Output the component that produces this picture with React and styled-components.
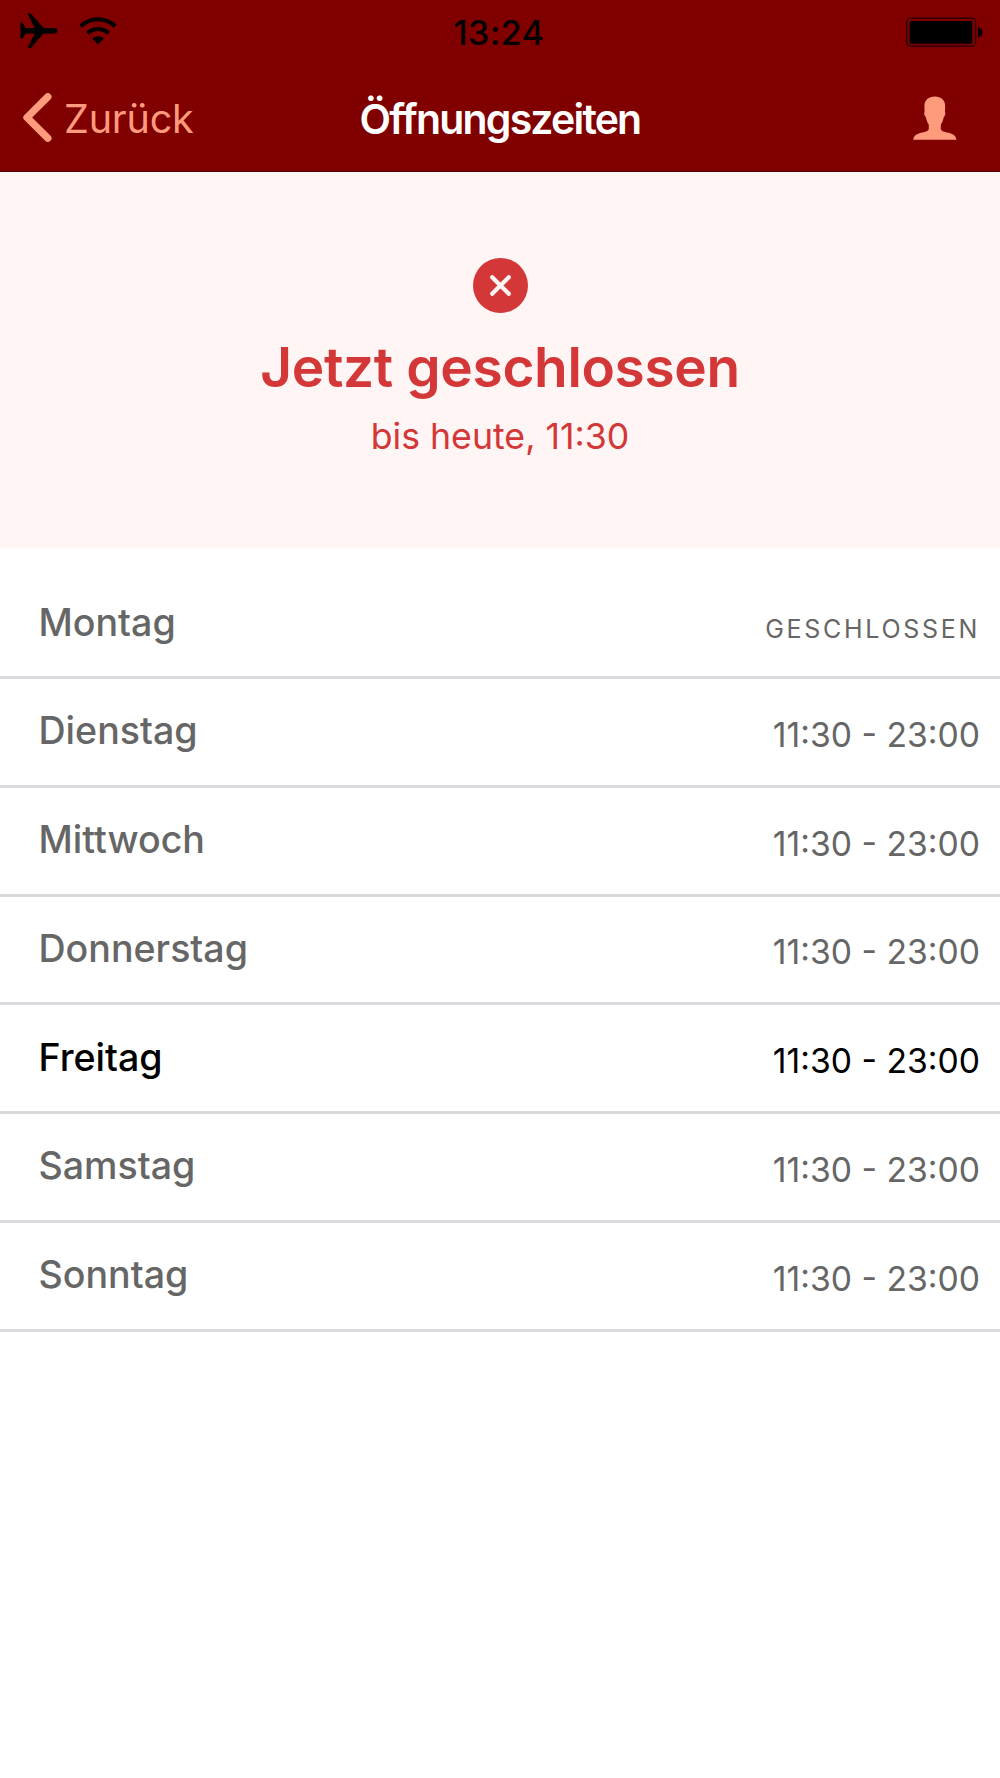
import React from "react"
import styled, { createGlobalStyle } from "styled-components"

const theme = {
  colors: {
    primary: "#800000",
    primaryDark: "#5c0000",
    accent: "#ff9b7d",
    closed: "#d33737",
    closedBackground: "#fff5f4",
    text: "#666666",
    border: "#d9d9de",
    black: "#000000",
    white: "#ffffff",
  },
}

const hours = [
  { day: "Montag", time: null },
  { day: "Dienstag", time: "11:30 - 23:00" },
  { day: "Mittwoch", time: "11:30 - 23:00" },
  { day: "Donnerstag", time: "11:30 - 23:00" },
  { day: "Freitag", time: "11:30 - 23:00", today: true },
  { day: "Samstag", time: "11:30 - 23:00" },
  { day: "Sonntag", time: "11:30 - 23:00" },
]

const AirplaneIcon = () => (
  <svg width="38" height="36" viewBox="0 0 38 36" fill="currentColor">
    <path d="M0.5 9.6 L2.4 9.6 L5.6 15 L14.6 15 L7.6 0.4 L10.8 0.4 L23.6 15 L34.4 15 C36.4 15.2 37.6 16.4 37.6 17.7 C37.6 19 36.4 20.2 34.4 20.4 L23.6 20.4 L10.8 35 L7.6 35 L14.6 20.4 L5.6 20.4 L2.4 25.8 L0.5 25.8 Z" />
  </svg>
)

const WifiIcon = () => (
  <svg width="38" height="28" viewBox="0 0 38 28" fill="none">
    <g stroke="currentColor" strokeWidth="4">
      <path d="M1.8 9.2 C11.6 -0.2 26.4 -0.2 36.2 9.2" />
      <path d="M8.4 16.2 C14.4 10.6 23.6 10.6 29.6 16.2" />
    </g>
    <path
      d="M13.2 21.4 C16.6 18.6 21.4 18.6 24.8 21.4 L19 27.4 Z"
      fill="currentColor"
    />
  </svg>
)

const BatteryIcon = () => (
  <svg width="78" height="31" viewBox="0 0 78 31" fill="currentColor">
    <rect
      x="1.6"
      y="1.2"
      width="69"
      height="28"
      rx="4"
      fill="none"
      stroke="currentColor"
      strokeWidth="1.3"
      opacity="0.75"
    />
    <rect x="4.6" y="4" width="62.6" height="22.8" rx="1.5" />
    <path d="M73 10 C76 11 77.6 13 77.6 15.2 C77.6 17.6 76 19.6 73 20.6 Z" />
  </svg>
)

const ChevronIcon = () => (
  <svg width="30" height="50" viewBox="0 0 30 50" fill="none">
    <path
      d="M24.8 3.8 L4 24.5 L24.8 45.2"
      stroke="currentColor"
      strokeWidth="7.4"
      strokeLinecap="round"
      strokeLinejoin="round"
    />
  </svg>
)

const PersonIcon = () => (
  <svg width="44" height="44" viewBox="0 0 44 44" fill="currentColor">
    <path d="M21.8 0.6 C28 0.6 32.2 4.4 32.2 10 L32 16 C33 17.2 32 20 30.8 21 C30.2 24.4 29 26.8 27.8 28.6 L27.8 33 C28.6 36 33.6 36.2 37 37.2 C41 38.4 43.2 40.4 43.4 43.8 L0.2 43.8 C0.4 40.4 2.6 38.4 6.6 37.2 C10 36.2 15 36 15.8 33 L15.8 28.6 C14.6 26.8 13.4 24.4 12.8 21 C11.6 20 10.6 17.2 11.6 16 L11.4 10 C11.4 4.4 15.6 0.6 21.8 0.6 Z" />
  </svg>
)

const CrossIcon = () => (
  <svg width="21" height="21" viewBox="0 0 21 21" fill="none">
    <path
      d="M2.2 2.2 L18.8 18.8 M18.8 2.2 L2.2 18.8"
      stroke="currentColor"
      strokeWidth="4.2"
      strokeLinecap="round"
    />
  </svg>
)

const App = () => {
  return (
    <>
      <GlobalStyle />
      <Screen>
        <Header>
          <StatusBar>
            <Signals>
              <AirplaneIcon />
              <WifiIcon />
            </Signals>
            <Clock>13:24</Clock>
            <Battery>
              <BatteryIcon />
            </Battery>
          </StatusBar>
          <NavBar>
            <BackButton>
              <ChevronIcon />
              <span>Zurück</span>
            </BackButton>
            <Title>Öffnungszeiten</Title>
            <ProfileButton aria-label="Profil">
              <PersonIcon />
            </ProfileButton>
          </NavBar>
        </Header>

        <Status>
          <StatusBadge>
            <CrossIcon />
          </StatusBadge>
          <StatusHeading>Jetzt geschlossen</StatusHeading>
          <StatusText>bis heute, 11:30</StatusText>
        </Status>

        <HoursList>
          {hours.map(({ day, time, today }) => (
            <HoursRow key={day} $today={today}>
              <Day>{day}</Day>
              {time ? <Time>{time}</Time> : <Closed>Geschlossen</Closed>}
            </HoursRow>
          ))}
        </HoursList>
      </Screen>
    </>
  )
}

const GlobalStyle = createGlobalStyle`
  * {
    box-sizing: border-box;
  }
  body {
    margin: 0;
    background: ${theme.colors.white};
    font-family: Inter, "Liberation Sans", sans-serif;
  }
  svg {
    display: block;
    flex: none;
  }
`

const Screen = styled.main`
  min-height: 1778px;
`

const Header = styled.header`
  height: 172px;
  background: ${theme.colors.primary};
  border-bottom: 1px solid ${theme.colors.primaryDark};
`

const StatusBar = styled.div`
  display: grid;
  grid-template-columns: 1fr auto 1fr;
  align-items: center;
  height: 64px;
  padding: 0 17px 0 20px;
  color: ${theme.colors.black};
`

const Signals = styled.div`
  display: flex;
  align-items: center;
  gap: 21px;
  padding-bottom: 2px;
`

const Clock = styled.div`
  margin-right: 5px;
  font-size: 34px;
  font-weight: 500;
  letter-spacing: 0.5px;
`

const Battery = styled.div`
  display: flex;
  justify-content: flex-end;
`

const NavBar = styled.nav`
  display: grid;
  grid-template-columns: 1fr auto 1fr;
  align-items: center;
  height: 108px;
  padding: 0 23px;
`

const NavButton = styled.button`
  display: flex;
  align-items: center;
  padding: 0;
  border: 0;
  background: none;
  color: ${theme.colors.accent};
  font: inherit;
`

const BackButton = styled(NavButton)`
  gap: 11px;
  font-size: 39.5px;
  letter-spacing: -0.2px;
  span {
    padding-top: 2px;
  }
`

const ProfileButton = styled(NavButton)`
  justify-self: end;
  margin-right: 20px;
`

const Title = styled.h1`
  margin: 0;
  padding-top: 1px;
  color: ${theme.colors.white};
  font-size: 41px;
  font-weight: 600;
  letter-spacing: -1.8px;
`

const Status = styled.section`
  display: flex;
  flex-direction: column;
  align-items: center;
  height: 376px;
  padding-top: 85.5px;
  background: ${theme.colors.closedBackground};
  color: ${theme.colors.closed};
`

const StatusBadge = styled.div`
  display: flex;
  align-items: center;
  justify-content: center;
  width: 55px;
  height: 55px;
  border-radius: 50%;
  background: ${theme.colors.closed};
  color: ${theme.colors.closedBackground};
`

const StatusHeading = styled.h2`
  margin: 19.5px 0 0;
  font-size: 55px;
  font-weight: 600;
  letter-spacing: -0.35px;
  line-height: 70px;
`

const StatusText = styled.p`
  margin: 9px 0 0;
  font-size: 35.7px;
  line-height: 50px;
`

const HoursList = styled.ul`
  margin: 0;
  padding: 22.3px 0 0;
  list-style: none;
`

const HoursRow = styled.li`
  display: flex;
  align-items: center;
  justify-content: space-between;
  height: 108.75px;
  padding: 0 20px 0 38.5px;
  border-bottom: 3px solid ${theme.colors.border};
  color: ${({ $today }) => ($today ? theme.colors.black : theme.colors.text)};
`

const Day = styled.span`
  padding-bottom: 2px;
  font-size: 37.6px;
  font-weight: 500;
`

const Time = styled.span`
  padding-top: 5px;
  font-size: 33.7px;
`

const Closed = styled.span`
  padding-top: 11px;
  font-size: 25px;
  letter-spacing: 2.7px;
  text-transform: uppercase;
`

export default App
